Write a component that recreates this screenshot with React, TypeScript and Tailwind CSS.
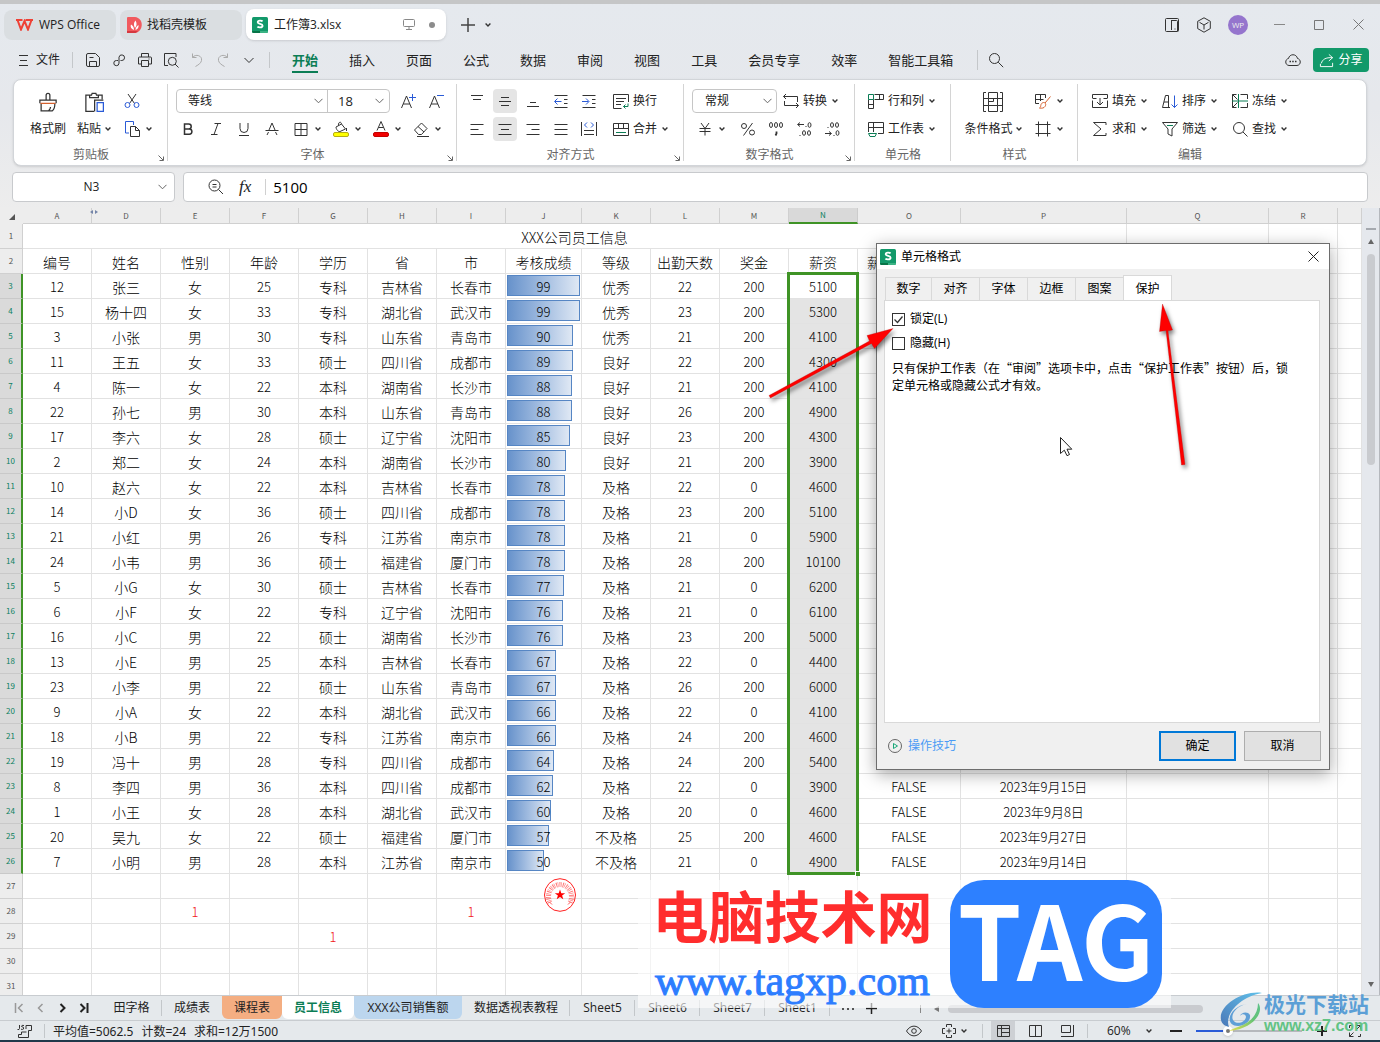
import type { ReactNode } from "react";
import { clsx } from "clsx";

type Row = [string, string, string, string, string, string, string, number, string, string, string, string, string?, string?];

const columns = [
  { name: "A", width: "w-[69px]" },
  { name: "D", width: "w-[69px]" },
  { name: "E", width: "w-[69px]" },
  { name: "F", width: "w-[69px]" },
  { name: "G", width: "w-[69px]" },
  { name: "H", width: "w-[69px]" },
  { name: "I", width: "w-[69px]" },
  { name: "J", width: "w-[76px]" },
  { name: "K", width: "w-[69px]" },
  { name: "L", width: "w-[69px]" },
  { name: "M", width: "w-[69px]" },
  { name: "N", width: "w-[69px]" },
  { name: "O", width: "w-[103px]" },
  { name: "P", width: "w-[166px]" },
  { name: "Q", width: "w-[142px]" },
  { name: "R", width: "w-[69px]" },
  { name: "", width: "" },
];

const headings = ["编号", "姓名", "性别", "年龄", "学历", "省", "市", "考核成绩", "等级", "出勤天数", "奖金", "薪资", "薪", "", "", "", ""];

const employees: Row[] = [
  ["12", "张三", "女", "25", "专科", "吉林省", "长春市", 99, "优秀", "22", "200", "5100"],
  ["15", "杨十四", "女", "33", "专科", "湖北省", "武汉市", 99, "优秀", "23", "200", "5300"],
  ["3", "小张", "男", "30", "专科", "山东省", "青岛市", 90, "优秀", "21", "200", "4100"],
  ["11", "王五", "女", "33", "硕士", "四川省", "成都市", 89, "良好", "22", "200", "4300"],
  ["4", "陈一", "女", "22", "本科", "湖南省", "长沙市", 88, "良好", "21", "200", "4100"],
  ["22", "孙七", "男", "30", "本科", "山东省", "青岛市", 88, "良好", "26", "200", "4900"],
  ["17", "李六", "女", "28", "硕士", "辽宁省", "沈阳市", 85, "良好", "23", "200", "4300"],
  ["2", "郑二", "女", "24", "本科", "湖南省", "长沙市", 80, "良好", "21", "200", "3900"],
  ["10", "赵六", "女", "22", "本科", "吉林省", "长春市", 78, "及格", "22", "0", "4600"],
  ["14", "小D", "女", "36", "硕士", "四川省", "成都市", 78, "及格", "23", "200", "5100"],
  ["21", "小红", "男", "26", "专科", "江苏省", "南京市", 78, "及格", "21", "0", "5900"],
  ["24", "小韦", "男", "36", "硕士", "福建省", "厦门市", 78, "及格", "28", "200", "10100"],
  ["5", "小G", "女", "30", "硕士", "吉林省", "长春市", 77, "及格", "21", "0", "6200"],
  ["6", "小F", "女", "22", "专科", "辽宁省", "沈阳市", 76, "及格", "21", "0", "6100"],
  ["16", "小C", "男", "22", "硕士", "湖南省", "长沙市", 76, "及格", "23", "200", "5000"],
  ["13", "小E", "男", "25", "本科", "吉林省", "长春市", 67, "及格", "22", "0", "4400"],
  ["23", "小李", "男", "22", "硕士", "山东省", "青岛市", 67, "及格", "26", "200", "6000"],
  ["9", "小A", "女", "22", "本科", "湖北省", "武汉市", 66, "及格", "22", "0", "4100"],
  ["18", "小B", "男", "22", "专科", "江苏省", "南京市", 66, "及格", "24", "200", "4600"],
  ["19", "冯十", "男", "28", "专科", "四川省", "成都市", 64, "及格", "24", "200", "5400"],
  ["8", "李四", "男", "36", "本科", "四川省", "成都市", 62, "及格", "22", "0", "3900", "FALSE", "2023年9月15日"],
  ["1", "小王", "女", "28", "本科", "湖北省", "武汉市", 60, "及格", "20", "0", "4600", "FALSE", "2023年9月8日"],
  ["20", "吴九", "女", "22", "硕士", "福建省", "厦门市", 57, "不及格", "25", "200", "4600", "FALSE", "2023年9月27日"],
  ["7", "小明", "男", "28", "本科", "江苏省", "南京市", 50, "不及格", "21", "0", "4900", "FALSE", "2023年9月14日"],
];

// loose values below the employee list, keyed by row then column
const strayCells: Record<number, Record<string, string>> = {
  28: { E: "1", I: "1" },
  29: { G: "1" },
};

const menus = ["开始", "插入", "页面", "公式", "数据", "审阅", "视图", "工具", "会员专享", "效率", "智能工具箱"];

const sheets = [
  { name: "田字格", style: "w-[61px]", line: true },
  { name: "成绩表", style: "w-[60px]" },
  { name: "课程表", style: "w-[60px] rounded-b-md bg-[#f4ae82]" },
  { name: "员工信息", style: "w-[72px] rounded-b-md bg-white font-bold text-[#0b7d55]" },
  { name: "XXX公司销售额", style: "w-[108px] rounded-b-md bg-[#bcd6ee]" },
  { name: "数据透视表教程", style: "w-[108px]", line: true },
  { name: "Sheet5", style: "w-[65px]", line: true },
  { name: "Sheet6", style: "w-[65px]", line: true },
  { name: "Sheet7", style: "w-[65px]", line: true },
  { name: "Sheet1", style: "w-[65px]", line: true },
];

const dialogTabs = ["数字", "对齐", "字体", "边框", "图案", "保护"];

function Icon({ size = 16, color = "#333", width = 1, children }: { size?: number; color?: string; width?: number; children: ReactNode }) {
  return (
    <svg width={size} height={size} viewBox="0 0 16 16" fill="none" stroke={color} strokeWidth={width} className="shrink-0" aria-hidden="true">
      {children}
    </svg>
  );
}

function Caret() {
  return (
    <svg width="6" height="6" viewBox="0 0 6 6" fill="none" stroke="#333" strokeWidth="1.4" className="shrink-0" aria-hidden="true">
      <path d="M.6 1.6 3 4l2.4-2.4" />
    </svg>
  );
}

function Chevron() {
  return (
    <svg width="9" height="6" viewBox="0 0 9 6" fill="none" stroke="#666" className="pointer-events-none shrink-0" aria-hidden="true">
      <path d="M.5.8l4 4 4-4" />
    </svg>
  );
}

function Tool({ label, children, caret, active, className = "w-7 justify-center" }: { label: string; children: ReactNode; caret?: boolean; active?: boolean; className?: string }) {
  return (
    <button type="button" aria-label={label} className={clsx("flex h-7 items-center", className)}>
      <span className={clsx("flex items-center justify-center", active && "size-6 rounded bg-[#e5e5e5]")}>{children}</span>
      {caret && <span className="ml-[6px]"><Caret /></span>}
    </button>
  );
}

function TextTool({ label, icon, caret, className }: { label: string; icon: ReactNode; caret?: boolean; className?: string }) {
  return (
    <button type="button" className={clsx("flex h-7 items-center gap-1 whitespace-nowrap", className)}>
      {icon}
      <span>{label}</span>
      {caret && <span className="ml-px"><Caret /></span>}
    </button>
  );
}

function Group({ label, className, corner, last, children }: { label: string; className: string; corner?: boolean; last?: boolean; children: ReactNode }) {
  return (
    <section aria-label={label} className={clsx("relative flex shrink-0 flex-col pt-[7px]", className)}>
      {children}
      <div className="flex h-[22px] items-center justify-center pt-px text-[#666]">{label}</div>
      {corner && (
        <svg width="6" height="6" viewBox="0 0 6 6" fill="none" stroke="#666" className="absolute right-1 bottom-1" aria-hidden="true">
          <path d="M.5.5l4.500 4.500M5.500 1.500v4h-4" />
        </svg>
      )}
      {!last && <span className="absolute top-1 right-0 bottom-1 w-px bg-[#d4d4d4]" />}
    </section>
  );
}

function SheetLogo() {
  return (
    <svg width="16" height="16" viewBox="0 0 16 16" className="shrink-0" aria-hidden="true">
      <rect width="16" height="16" rx="1.500" fill="#12996a" />
      <path d="M0 14h8v2H1.500Q0 16 0 14z" fill="#087447" />
      <path d="M8 14h8q0 2-1.500 2H8z" fill="#3bb384" />
      <path d="M10.600 4.300C9.800 3.500 5.700 3 5.700 5.300c0 2 4.900 1.300 4.900 3.400 0 2.300-4.200 2-5.200 1" fill="none" stroke="#fff" strokeWidth="1.800" />
    </svg>
  );
}

function TitleBar() {
  return (
    <header className="flex h-10 shrink-0 items-center pt-px pl-1">
      <button type="button" className="flex h-[30px] w-28 items-center gap-[6px] rounded-lg bg-[#dadee1] pl-3">
        <svg width="17" height="12" viewBox="0 0 17 12" fill="none" stroke="#ee4136" strokeWidth="2" aria-hidden="true">
          <path d="M0 1h6.500M1.500 1l3.500 9.500L8.500 2l3.500 8.500L15.500 1M9.500 1H17" />
        </svg>
        WPS Office
      </button>
      <button type="button" className="ml-1 flex h-[30px] w-[122px] items-center gap-[5px] rounded-lg bg-[#dadee1] pl-[7px]">
        <svg width="15" height="16" viewBox="0 0 15 16" aria-hidden="true">
          <path d="M0 1q0-1 1-1h7c9 1 9 14 0 16H0z" fill="#f15a5e" />
          <path d="M0 14h11l-2.500 2H0z" fill="#d5383f" />
          <path d="M7 13C4 12 3 9.500 4 7.500c2 1 3 3 3 5.500zM8 11c-1.500-3-1.500-5 .5-7.500C10 6 10 8.500 8 11zM8.500 13c0-2 1-4 3-5 .5 2.500-1 4.500-3 5z" fill="#fff" />
        </svg>
        找稻壳模板
      </button>
      <button type="button" className="ml-1 flex h-[31px] w-[200px] items-center gap-[6px] rounded-lg bg-white pl-[6px] shadow-sm">
        <SheetLogo />
        工作簿3.xlsx
        <span className="ml-auto flex items-center gap-[14px] pr-[11px]">
          <svg width="12" height="11" viewBox="0 0 12 11" fill="none" stroke="#888" aria-hidden="true">
            <rect x=".5" y=".5" width="11" height="7" rx="1" />
            <path d="M6 8v2M3 10.500h6" />
          </svg>
          <span className="size-[6px] rounded-full bg-[#8c8c8c]" />
        </span>
      </button>
      <button type="button" aria-label="新建" className="ml-[14px]">
        <Icon color="#444" width={1.500}><path d="M8 1v14M1 8h14" /></Icon>
      </button>
      <button type="button" aria-label="标签列表" className="ml-[9px]"><Caret /></button>
      <div className="ml-auto flex items-center">
        <button type="button" aria-label="窗口布局" className="mr-4">
          <Icon><rect x="1.500" y="1.500" width="13" height="13" rx="1" /><path d="M7.500 3v10M7.500 3.500h5q1 0 1 1V14M10.500 12h1" /></Icon>
        </button>
        <button type="button" aria-label="应用" className="mr-4">
          <Icon><path d="M8 .8l6.300 3.500v7.300L8 15.200l-6.300-3.600V4.300zM3.500 5.300 8 8l4.500-2.700M8 8v4.500" /></Icon>
        </button>
        <span className="mr-[26px] flex size-5 items-center justify-center rounded-full bg-[#9575cd] text-[8px] text-[#eee]">WP</span>
        <button type="button" aria-label="最小化" className="mr-[29px]"><svg width="11" height="11" stroke="#888"><path d="M0 5.500h11" /></svg></button>
        <button type="button" aria-label="最大化" className="mr-[29px]"><svg width="10" height="10" fill="none" stroke="#777"><path d="M.5.5h9v9h-9z" /></svg></button>
        <button type="button" aria-label="关闭" className="mr-4"><svg width="11" height="11" stroke="#777"><path d="M.5.5l10 10M10.500.5l-10 10" /></svg></button>
      </div>
    </header>
  );
}

function MenuBar() {
  return (
    <nav className="flex h-[34px] shrink-0 items-center pb-[2px] pl-[19px]">
      <button type="button" className="flex items-center gap-2">
        <svg width="9" height="11" stroke="#333" aria-hidden="true"><path d="M0 .5h9M1 5.500h7M0 10.500h9" /></svg>
        文件
      </button>
      <span className="ml-3 h-4 w-px bg-[#c4c7ca]" />
      <div className="ml-3 flex gap-[10px]">
        <button type="button" aria-label="保存">
          <Icon><path d="M1.500 3q0-1.500 1.500-1.500h7.500l4 4V13q0 1.500-1.500 1.500H3q-1.500 0-1.500-1.500zM4.500 14V9.500h7V14M4.500 5.500h4" /></Icon>
        </button>
        <button type="button" aria-label="输出链接">
          <Icon><path d="M7 8.500H5.500a2.600 2.600 0 1 0 2.500 2.700V5.200a2.800 2.800 0 1 1 2.800 3.300H9.500" /></Icon>
        </button>
        <button type="button" aria-label="打印">
          <Icon><path d="M4.500 5V1.500h7V5M4.500 12H1.500V6q0-1 1-1h11q1 0 1 1v6h-3M4.500 8.500h7v6h-7zM11.500 7h1" /></Icon>
        </button>
        <button type="button" aria-label="打印预览">
          <Icon><path d="M13 5V1.500H1.500v12H5M12 12l3.500 3.500" /><circle cx="9.300" cy="9.300" r="4" /></Icon>
        </button>
        <button type="button" aria-label="撤销">
          <Icon color="#aaa"><path d="M3.500 1.500v4h4M3.500 5.500c3-4 10-2 9 3-.5 2.500-2.500 4-6 6" /></Icon>
        </button>
        <button type="button" aria-label="恢复">
          <Icon color="#aaa"><path d="M12.500 1.500v4h-4M12.500 5.500c-3-4-10-2-9 3 .5 2.500 2.500 4 6 6" /></Icon>
        </button>
        <button type="button" aria-label="更多">
          <Icon><path d="M3.500 6 8 10.500 12.500 6" /></Icon>
        </button>
      </div>
      <span className="ml-3 h-4 w-px bg-[#c4c7ca]" />
      <div className="ml-[22px] flex gap-[31px] pt-px text-[13px]">
        {menus.map((menu, i) => (
          <button
            key={menu}
            type="button"
            className={clsx("h-[25px] whitespace-nowrap border-b-2 leading-5", i === 0 ? "border-[#0b7d55] font-bold text-[#0b7d55]" : "border-transparent")}
          >
            {menu}
          </button>
        ))}
      </div>
      <span className="ml-6 h-5 w-px bg-[#c4c7ca]" />
      <button type="button" aria-label="搜索" className="ml-[10px]">
        <Icon><circle cx="6.500" cy="6.500" r="5" /><path d="M10.200 10.200l5 5" /></Icon>
      </button>
      <button type="button" aria-label="云同步" className="ml-auto">
        <Icon><path d="M4 13.500c-4.500-.5-4-6.500-.5-7 1-5 8-5 9 0 3.500.5 4 6.500-.5 7z" /><path d="M4.500 9.500h1.500M7.200 9.500h1.500M10 9.500h1.500" strokeWidth="1.500" /></Icon>
      </button>
      <button type="button" className="mr-[11px] ml-3 flex h-6 w-14 items-center justify-center gap-1 rounded bg-[#12996a] text-white">
        <Icon color="#fff" size={15}><path d="M10.500 1.500 14.500 5l-4 3.500M14.500 5C7 4.500 3.500 7 2.500 11M1.500 11.500v3h13v-4" /></Icon>
        分享
      </button>
    </nav>
  );
}

function Ribbon() {
  return (
    <div className="mx-[13px] mt-px flex h-[87px] shrink-0 overflow-hidden rounded-lg border border-[#d2d5d9] bg-white shadow">
      <Group label="剪贴板" corner className="w-[154px]">
        <div className="flex pl-3">
          <button type="button" className="flex w-11 flex-col items-center whitespace-nowrap">
            <span className="flex h-7 items-center pt-[2px]">
              <Icon size={20}><path d="M6.500 6V2.500a1.500 1.500 0 0 1 3 0V6M1.500 9V6.500h13V9M2.500 9v6h9c1.500-1 2-3 2-6M8.500 15c1-1 1.500-2 1.500-3" /><path d="M2 9h12" stroke="#d5622f" /></Icon>
            </span>
            <span className="flex h-7 items-center">格式刷</span>
          </button>
          <button type="button" className="flex w-12 flex-col items-center whitespace-nowrap">
            <span className="flex h-7 items-center pt-[2px]">
              <Icon size={20}><path d="M4 2.500H1.500v13H8M12 2.500h2.500V6M4.500 4.500v-2H6l.5-1.500h3l.5 1.500h1.500v2z" /><path d="M8.500 15.500v-9h7" /><rect x="10.500" y="8.500" width="5" height="7" stroke="#2a5bd7" /></Icon>
            </span>
            <span className="flex h-7 items-center gap-1">粘贴<Caret /></span>
          </button>
          <div>
            <Tool label="剪切" className="w-7 justify-center"><Icon><path d="M4 1l6.500 9.500M12 1 5.500 10.500" /><circle cx="3.500" cy="12" r="2.500" stroke="#2a5bd7" /><circle cx="12.500" cy="12" r="2.500" stroke="#2a5bd7" /></Icon></Tool>
            <Tool label="复制" caret className="pl-[6px]"><Icon><path d="M5 12H1.500V.5h8V4" stroke="#2a5bd7" /><path d="M6.500 5.500h5l4 4v6h-9zM11.500 5.500v4h4" /></Icon></Tool>
          </div>
        </div>
      </Group>

      <Group label="字体" corner className="w-[289px]">
        <div className="flex h-7 items-center pl-2">
          <div className="flex h-6 items-center rounded border border-[#c6c6c6]">
            <div className="flex h-full w-[151px] items-center border-r border-[#c6c6c6] pr-1">
              <select aria-label="字体名称" className="w-full appearance-none pl-[11px] outline-none"><option>等线</option></select>
              <Chevron />
            </div>
            <div className="flex h-full w-[61px] items-center pr-[5px]">
              <select aria-label="字号" className="w-full appearance-none pl-[10px] text-[13px] outline-none"><option>18</option></select>
              <Chevron />
            </div>
          </div>
          <div className="ml-1 flex">
            <Tool label="增大字号"><Icon><path d="M1.500 15 6.500 3l5 12M3.200 11h6.600" /><path d="M9 4.500h7M12.500 1v7" stroke="#2a5bd7" /></Icon></Tool>
            <Tool label="减小字号"><Icon><path d="M1.500 15 6.500 3l5 12M3.200 11h6.600" /><path d="M9 2.500h7" stroke="#2a5bd7" /></Icon></Tool>
          </div>
        </div>
        <div className="flex pl-[6px]">
          <Tool label="加粗"><Icon width={1.500}><path d="M4.500 3h4.200a2.400 2.400 0 0 1 0 5H4.500zM4.500 8h4.800a2.500 2.500 0 0 1 0 5.200H4.500z" /></Icon></Tool>
          <Tool label="倾斜"><Icon><path d="M6.500 2.500h6.500M3 13.500h6.500M10 2.500 6 13.500" /></Icon></Tool>
          <Tool label="下划线"><Icon><path d="M4 2v5.500a4 4 0 0 0 8 0V2M3 14.500h10" /></Icon></Tool>
          <Tool label="删除线"><Icon><path d="M8 2 5 9M8 2l3 7M1.500 9.500h13M4.500 11l-1.500 3M11.500 11l1.500 3" /></Icon></Tool>
          <Tool label="边框" caret className="w-10 pl-[7px]"><Icon><path d="M2 2.500h12v12H2zM8 2.500v12M2 8.500h12" /></Icon></Tool>
          <Tool label="填充颜色" caret className="w-10 pl-[7px]">
            <Icon><path d="M3 6l5.500-3 4 5-5.500 2.500c-2 .5-4-2.500-4-4.500zM5.500 4.500C5 1 8 0 8.500 3M13.500 7v3" /><rect x=".5" y="11.500" width="15" height="4" rx="1.500" fill="#ffff00" stroke="#b5ad14" /></Icon>
          </Tool>
          <Tool label="字体颜色" caret className="w-10 pl-[7px]">
            <Icon><path d="M4 9.500 8 .5l4 9M5.500 6.500h5" /><rect x=".5" y="11.500" width="15" height="4" rx="1.500" fill="#f00000" stroke="#c40000" /></Icon>
          </Tool>
          <Tool label="清除" caret className="w-10 pl-[7px]"><Icon><path d="M1.500 9 8.500 2l5.500 5.500-5.500 6H5.500zM5 5.500l6 5.500M4 15.500h12" /></Icon></Tool>
        </div>
      </Group>

      <Group label="对齐方式" corner className="w-[227px]">
        <div className="flex pl-[6px]">
          <Tool label="顶端对齐"><Icon><path d="M2 2.500h12M4 6.500h8" /></Icon></Tool>
          <Tool label="垂直居中" active><Icon><path d="M4 4.500h8M2 8.500h12M4 12.500h8" /></Icon></Tool>
          <Tool label="底端对齐"><Icon><path d="M5 9.500h6M2 13.500h12" /></Icon></Tool>
          <Tool label="减少缩进"><Icon><path d="M1.500 2.500h13M11 6.500h3.500M11 10.500h3.500M1.500 14.500h13" /><path d="M8.500 8.500H2M4.500 5.500l-3 3 3 3" stroke="#2a5bd7" /></Icon></Tool>
          <Tool label="增加缩进"><Icon><path d="M1.500 2.500h13M11 6.500h3.500M11 10.500h3.500M1.500 14.500h13" /><path d="M1 8.500h6.500M5 5.500l3 3-3 3" stroke="#2a5bd7" /></Icon></Tool>
          <TextTool label="换行" className="pl-[10px]" icon={<Icon><path d="M8.500 15.500H.5V1.500h15V9M3 5.500h10M3 8.500h8M3 11.500h5" /><path d="M15 10.500v3h-4.500M12.500 11.500l-2 2 2 2" stroke="#0b7d55" /></Icon>} />
        </div>
        <div className="flex pl-[6px]">
          <Tool label="左对齐"><Icon><path d="M1.500 3.500h13M1.500 8.500h8M1.500 13.500h13" /></Icon></Tool>
          <Tool label="水平居中" active><Icon><path d="M1.500 3.500h13M4 8.500h8M1.500 13.500h13" /></Icon></Tool>
          <Tool label="右对齐"><Icon><path d="M1.500 3.500h13M6.500 8.500h8M1.500 13.500h13" /></Icon></Tool>
          <Tool label="两端对齐"><Icon><path d="M1.500 3.500h13M1.500 8.500h13M1.500 13.500h13" /></Icon></Tool>
          <Tool label="分散对齐"><Icon><path d="M.5 1v14M15.500 1v14M3 9.500h10M3 13.500h10" /><path d="M6 1.500l-2.500 2.500L6 6.500M10 1.500l2.500 2.500L10 6.500" stroke="#2a5bd7" /></Icon></Tool>
          <TextTool label="合并" caret className="pl-[10px]" icon={<Icon><path d="M.5 2.500h15v12H.5zM.5 7.500h15M5.500 2.500v5M10.500 2.500v5" /><path d="M3 11.500h10" stroke="#0b7d55" /></Icon>} />
        </div>
      </Group>

      <Group label="数字格式" corner className="w-[171px]">
        <div className="flex h-7 items-center pl-2">
          <div className="flex h-6 w-[85px] items-center rounded border border-[#c6c6c6] pr-1">
            <select aria-label="数字格式" className="w-full appearance-none pl-3 outline-none"><option>常规</option></select>
            <Chevron />
          </div>
          <TextTool label="转换" caret className="pl-[6px]" icon={<Icon><path d="M3 1 .5 3.500 3 6M.5 3.500h14V9M13 10l2.500 2.500L13 15M15.500 12.500h-14V8" /></Icon>} />
        </div>
        <div className="flex pl-2">
          <Tool label="货币" caret className="w-[42px] pl-[5px]"><Icon><path d="M4 2l4 5.500L12 2M2.500 7.500h11M2.500 10.500h11M8 7.500v7" /></Icon></Tool>
          <Tool label="百分比"><Icon><circle cx="4" cy="5" r="2.500" /><circle cx="12" cy="11.500" r="2.500" /><path d="M12.500 2l-9 12.500" /></Icon></Tool>
          <Tool label="千位分隔"><Icon><ellipse cx="3" cy="4" rx="1.500" ry="2.500" /><ellipse cx="8" cy="4" rx="1.500" ry="2.500" /><ellipse cx="13" cy="4" rx="1.500" ry="2.500" /><path d="M8.500 10.500v2l-1 2" strokeWidth="1.800" /></Icon></Tool>
          <Tool label="增加小数位"><Icon><path d="M8 3.500H2M4 1.500l-2.500 2 2.500 2M9.500 5.500h1M3.500 14.500h1" /><ellipse cx="13.500" cy="4" rx="1.500" ry="2.300" /><ellipse cx="8" cy="12" rx="1.500" ry="2.300" /><ellipse cx="13" cy="12" rx="1.500" ry="2.300" /></Icon></Tool>
          <Tool label="减少小数位"><Icon><path d="M1 12.500h6M5 10.500l2.500 2-2.500 2M9.500 14.500h1M3.500 6.500h1" /><ellipse cx="13.500" cy="12" rx="1.500" ry="2.300" /><ellipse cx="8" cy="4" rx="1.500" ry="2.300" /><ellipse cx="13" cy="4" rx="1.500" ry="2.300" /></Icon></Tool>
        </div>
      </Group>

      <Group label="单元格" className="w-24">
        <TextTool label="行和列" caret className="pl-[13px]" icon={<Icon><path d="M6.500 1.500h9V6.500h-9M11.500 1.500v5M.5 6.500v9h5v-9M.5 11.500h5" /><path d="M.5 1.500h5v5h-5z" stroke="#0b7d55" /></Icon>} />
        <TextTool label="工作表" caret className="pl-[13px]" icon={<Icon><path d="M.5 11V1.500h15v11H10M.5 6.500h15M5.500 1.500V11" /><path d="M.5 12.500h8l-1.500 3h-5z" stroke="#0b7d55" /></Icon>} />
      </Group>

      <Group label="样式" className="w-[127px]">
        <div className="flex pl-3">
          <button type="button" className="flex w-[60px] flex-col items-center whitespace-nowrap">
            <span className="flex h-7 items-center pt-[2px]">
              <svg width="20" height="20" viewBox="0 0 20 20" fill="none" stroke="#333" aria-hidden="true">
                <path d="M3 .5H.5v19H3M17 .5h2.500v19H17M.5 6.500h5M.5 13.500h5M14.500 6.500h5M14.500 13.500h5M5.500 .5h9v6h-9zM5.500 13.500h9v6h-9zM5.500 6.500v7M14.500 6.500v7M10.500 6.500v3h-5" />
              </svg>
            </span>
            <span className="flex h-7 items-center gap-[3px]">条件格式<Caret /></span>
          </button>
          <div className="pl-3">
            <Tool label="单元格样式" caret><Icon><path d="M10.500 5V1.500H.5v9H4M.5 6.500h8M5.500 1.500V8" /><path d="M15.500 3.500 10 10M8.500 9.500c2 0 3 2 1.500 4-1 1.500-3 2-5.500 1.500 1.500-1 1-2 1.500-3.500.5-1 1.500-2 2.500-2z" stroke="#d5622f" /></Icon></Tool>
            <Tool label="表格边框" caret><Icon><path d="M3.500.5v15M12.500.5v15M.5 3.500h15M.5 12.500h15" /></Icon></Tool>
          </div>
        </div>
      </Group>

      <Group label="编辑" last className="w-[224px]">
        <div className="flex pl-[14px]">
          <TextTool label="填充" caret className="w-[70px]" icon={<Icon><path d="M.5 5V1.500h15V5M.5 5.500h4M11.500 5.500h4M.5 7.500v7h15v-7M8 5v7M5 9l3 3 3-3" /></Icon>} />
          <TextTool label="排序" caret className="w-[70px]" icon={<Icon><path d="M.5 14.500l3-12h3v12M2 9h4.500M.5 14.500h7.500" /><path d="M12.500 2.500v12M9.500 11.500l3 3 3-3" stroke="#2a5bd7" /></Icon>} />
          <TextTool label="冻结" caret className="w-[70px]" icon={<Icon><path d="M4.500 1.500h-4v13h4M8.500 1.500h7V6M15.500 10v4.500h-7M.5 1.500l5 5M.5 14.500l5-5" /><path d="M0 8h16M6.500 1v14" stroke="#0b7d55" /></Icon>} />
        </div>
        <div className="flex pl-[14px]">
          <TextTool label="求和" caret className="w-[70px]" icon={<Icon><path d="M14 4V1.500H1.500L9 8l-7.500 6.500H14V12" /></Icon>} />
          <TextTool label="筛选" caret className="w-[70px]" icon={<Icon><path d="M.5 1.500h15L10 8v7l-4-2V8z" /><path d="M5 4.500h6" stroke="#0b7d55" /></Icon>} />
          <TextTool label="查找" caret className="w-[70px]" icon={<Icon><circle cx="7" cy="7" r="5.500" /><path d="M11 11l4.500 4.500" /></Icon>} />
        </div>
      </Group>
    </div>
  );
}

function FormulaBar() {
  return (
    <div className="mx-3 mt-[6px] flex h-[30px] shrink-0 gap-2">
      <label className="flex w-[163px] items-center rounded border border-[#c8cacd] bg-white pr-[7px]">
        <input aria-label="名称框" defaultValue="N3" className="w-full min-w-0 pl-3 text-center outline-none" />
        <Chevron />
      </label>
      <div className="flex flex-1 items-center rounded border border-[#c8cacd] bg-white pl-6">
        <button type="button" aria-label="浏览公式"><Icon><circle cx="6.500" cy="6.500" r="5.500" /><path d="M10.500 10.500l4.500 4.500M4.500 5.500h4M4.500 8h4" /></Icon></button>
        <button type="button" aria-label="插入函数" className="ml-[15px] font-['Liberation_Serif',serif] text-[17px]/5 italic">fx</button>
        <span className="ml-[14px] h-4 w-px bg-[#d0d0d0]" />
        <input aria-label="编辑栏" defaultValue="5100" className="ml-[7px] w-full min-w-0 flex-1 text-[15px] text-black outline-none" />
      </div>
    </div>
  );
}

function Stamp() {
  return (
    <svg width="32" height="34" viewBox="0 0 32 34" fill="none" className="absolute top-1 left-[38px] z-10" aria-hidden="true">
      <ellipse cx="16" cy="17" rx="15.500" ry="16.300" stroke="#f22" />
      <path d="M6 24.500A11.500 12 0 1 1 26 24.500" stroke="#f33" strokeWidth="5" strokeDasharray="1 .7 .6 1.100" opacity=".65" />
      <path d="M16 11.500l1.300 3.700h3.900l-3.100 2.300 1.200 3.800-3.300-2.300-3.300 2.300 1.200-3.800-3.100-2.300h3.900z" fill="#f00" />
      <path d="M5.500 24l2.500 2.500M26.500 24l-2.500 2.500" stroke="#f55" />
    </svg>
  );
}

function RowHead({ n, selected }: { n: number; selected?: boolean }) {
  return (
    <th
      scope="row"
      className={clsx(
        "h-[25px] border-b p-0 text-center text-[8px]/[16px] font-normal",
        selected ? "border-r-2 border-r-[#3f9326] border-b-[#c9c9c9] bg-[#dadada] text-[#0b8060]" : "border-r border-[#d0d0d0] bg-[#ededed] text-[#555]",
      )}
    >
      {n}
    </th>
  );
}

const cell = "h-[25px] overflow-hidden border-r border-b border-[#e2e2e2] p-0 pt-px text-center whitespace-nowrap";
const isNumber = (v: unknown) => /^[\dF]/.test(String(v));

function Grid() {
  return (
    <div className="relative min-w-0 flex-1 overflow-hidden bg-white">
      <table className="w-full table-fixed border-separate border-spacing-0 font-['Noto_Sans_CJK_SC',sans-serif] font-light text-black">
        <colgroup>
          <col className="w-[23px]" />
          {columns.map((c, i) => <col key={i} className={c.width} />)}
        </colgroup>
        <thead>
          <tr className="bg-[#ededed] text-[8px]/[14px] text-[#555]">
            <th className="h-[16px] p-0 pt-[2px]">
              <svg width="6" height="6" className="ml-[9px]" aria-hidden="true"><path d="M6 0v6H0z" fill="#555" /></svg>
            </th>
            {columns.map((c, i) => (
              <th
                key={i}
                scope="col"
                className={clsx(
                  "h-[16px] border-r p-0 font-normal",
                  c.name === "N" ? "border-b-2 border-r-[#ccc] border-b-[#3f9326] bg-[#d9d9d9] text-[#0b8060]" : "border-b border-[#d0d0d0] pt-px",
                )}
              >
                {c.name}
              </th>
            ))}
          </tr>
        </thead>
        <tbody>
          <tr>
            <RowHead n={1} />
            <td colSpan={14} className={clsx(cell, "text-[14px]/[18px]")}>XXX公司员工信息</td>
            <td className={cell} /><td className={cell} /><td className={cell} />
          </tr>
          <tr>
            <RowHead n={2} />
            {headings.map((h, i) => (
              <td key={i} className={clsx(cell, "text-[14px]/[18px]", i === 12 && "pl-[9px] text-left")}>{h}</td>
            ))}
          </tr>
          {employees.map((row, r) => (
            <tr key={row[0]}>
              <RowHead n={r + 3} selected />
              {columns.map((c, i) => {
                const value = row[i];
                if (c.name === "J") {
                  return (
                    <td key={i} className={clsx(cell, "relative pt-[2px] text-[13px]/[18px]")}>
                      <span
                        className="absolute top-px left-px h-[21px] border border-[#5686c4] bg-linear-to-r from-[#6792cb] to-[#dfe8f4]"
                        style={{ width: Math.round((row[7] / 99) * 73) }}
                      />
                      <span className="relative">{value}</span>
                    </td>
                  );
                }
                return (
                  <td
                    key={i}
                    className={clsx(cell, isNumber(value) ? "pt-[2px] text-[13px]/[18px]" : "text-[14px]/[18px]", c.name === "N" && r > 0 && "border-[#cfcfcf] bg-[#e4e4e4]")}
                  >
                    {value}
                  </td>
                );
              })}
            </tr>
          ))}
          {[27, 28, 29, 30, 31].map((n) => (
            <tr key={n}>
              <RowHead n={n} />
              {columns.map((c, i) => (
                <td key={i} className={clsx(cell, "text-[13px]/[18px] text-[#f01818]", n === 27 && c.name === "J" && "relative overflow-visible")}>
                  {strayCells[n]?.[c.name]}
                  {n === 27 && c.name === "J" && <Stamp />}
                </td>
              ))}
            </tr>
          ))}
        </tbody>
      </table>
      {/* selection frame around N3:N26 */}
      <div className="pointer-events-none absolute top-[64px] left-[787px] h-[603px] w-[72px] border-3 border-[#3f9326]">
        <span className="absolute -right-1 -bottom-1 size-[5px] border-t border-l border-white bg-[#3f9326]" />
      </div>
      {/* marker for the hidden columns between A and D */}
      <svg width="8" height="4" viewBox="0 0 8 4" className="absolute top-[2px] left-[90px]" aria-hidden="true"><path d="M3 0v4L0 2zM5 0v4l3-2z" fill="#7384a8" /></svg>
    </div>
  );
}

function VerticalScroll() {
  return (
    <div className="flex w-[18px] shrink-0 flex-col items-center border-r border-[#b5b8bd] bg-[#e5e8ed] pt-[20px]">
      <span className="mb-[9px] h-[2px] w-[10px] bg-[#a5a9af]" />
      <svg width="6" height="5" aria-hidden="true"><path d="M3 0l3 5H0z" fill="#666" /></svg>
      <span className="mt-[10px] h-[211px] w-2 rounded-full bg-[#c9cbcf]" />
      <svg width="6" height="5" className="mt-auto mb-2" aria-hidden="true"><path d="M0 0h6L3 5z" fill="#666" /></svg>
    </div>
  );
}

function SheetTabs() {
  return (
    <div className="flex h-[26px] shrink-0 items-start border-t border-b border-[#c8ccd0] bg-[#e5e9ec]">
      <div className="flex h-6 w-[101px] items-center gap-[11px] pl-[14px]">
        <button type="button" aria-label="第一个"><svg width="10" height="10" fill="none" stroke="#999" strokeWidth="1.500"><path d="M1.500 0v10M8.500 1l-4 4 4 4" /></svg></button>
        <button type="button" aria-label="上一个"><svg width="10" height="10" fill="none" stroke="#999" strokeWidth="1.500"><path d="M7.500 1l-4 4 4 4" /></svg></button>
        <button type="button" aria-label="下一个" className="ml-[2px]"><svg width="10" height="10" fill="none" stroke="#222" strokeWidth="2"><path d="M2.500 1l4 4-4 4" /></svg></button>
        <button type="button" aria-label="最后一个"><svg width="10" height="10" fill="none" stroke="#222" strokeWidth="2"><path d="M8.500 0v10M1.500 1l4 4-4 4" /></svg></button>
      </div>
      {sheets.map((s) => (
        <button
          key={s.name}
          type="button"
          className={clsx("relative flex h-[23px] shrink-0 items-center justify-center whitespace-nowrap", s.style)}
        >
          {s.name}
          {s.line && <span className="absolute top-1 right-0 h-4 w-px bg-[#c3c7ca]" />}
        </button>
      ))}
      <div className="flex h-[25px] flex-1 items-center pl-3">
        <button type="button" aria-label="更多工作表" className="flex gap-[3px]">
          <span className="size-[2px] bg-[#555]" /><span className="size-[2px] bg-[#555]" /><span className="size-[2px] bg-[#555]" />
        </button>
        <button type="button" aria-label="新建工作表" className="ml-3"><svg width="11" height="11" stroke="#222" strokeWidth="1.500"><path d="M5.500 0v11M0 5.500h11" /></svg></button>
        <span className="ml-[43px] h-2 w-px bg-[#888]" />
        <svg width="5" height="6" className="ml-[13px]" aria-hidden="true"><path d="M5 0v6L0 3z" fill="#777" /></svg>
        <span className="ml-[9px] h-2 w-[255px] rounded-full bg-[#c9cbcf]" />
        <svg width="5" height="6" className="mr-[35px] ml-auto" aria-hidden="true"><path d="M0 0v6l5-3z" fill="#555" /></svg>
      </div>
    </div>
  );
}

function StatusBar() {
  return (
    <footer className="flex h-[19px] shrink-0 items-center bg-[#e5e9ec] pl-4 text-[12px]/[18px]">
      <Icon><path d="M3.500 2v3.500q0 1.500-2 1M8 2.500q-2.500-.8-2.500 1 3 .5 2 2.500-1 .8-2.500.2M10 6V2.500h5.500v5h-3v7H2.500v-3h3M5.500 11.500V9h5" /></Icon>
      <span className="ml-3 h-[14px] w-px bg-[#c3c7ca]" />
      <span className="ml-2 flex gap-2 pt-[2px] font-['Noto_Sans','Noto_Sans_CJK_SC',sans-serif]">
        <span>平均值=5062.5</span>
        <span>计数=24</span>
        <span>求和=12万1500</span>
      </span>
      <div className="ml-auto flex h-full items-center">
        <button type="button" aria-label="护眼模式"><Icon><path d="M.5 8c4-6.500 11-6.500 15 0-4 6.500-11 6.500-15 0z" /><circle cx="8" cy="8" r="2.300" /></Icon></button>
        <button type="button" aria-label="阅读模式" className="ml-[19px] flex items-center gap-1">
          <Icon><path d="M5.500 4V1.500h5V4M5.500 12v2.500h5V12M4 5.500H1.500v5H4M12 5.500h2.500v5H12M5.500 8h5M8 5.500v5" /></Icon>
          <Caret />
        </button>
        <span className="ml-[15px] h-[14px] w-px bg-[#c3c7ca]" />
        <button type="button" aria-label="普通视图" className="ml-2 flex h-full w-6 items-center justify-center bg-[#cdd0d4]">
          <svg width="13" height="12" viewBox="0 0 13 12" fill="none" stroke="#333" aria-hidden="true"><path d="M.5.5h12v11H.5zM.5 3.500h12M4.500.5v11M4.500 7.500h8" /></svg>
        </button>
        <button type="button" aria-label="页面布局" className="ml-[14px]">
          <svg width="13" height="12" viewBox="0 0 13 12" fill="none" stroke="#333" aria-hidden="true"><path d="M.5.5h12v11H.5zM6.500.5v11" /></svg>
        </button>
        <button type="button" aria-label="分页预览" className="ml-[19px]">
          <svg width="13" height="12" viewBox="0 0 13 12" fill="none" stroke="#333" aria-hidden="true"><path d="M.5.5h9v7h-9zM12.500 0v11.500H0" /></svg>
        </button>
        <span className="ml-[13px] h-[14px] w-px bg-[#c3c7ca]" />
        <span className="ml-[19px] w-[39px]">60%</span>
        <Caret />
        <button type="button" aria-label="缩小" className="ml-[18px] h-[2px] w-3 bg-[#222]" />
        <input
          type="range"
          aria-label="缩放"
          min={0}
          max={100}
          defaultValue={28}
          className="ml-[14px] h-[2px] w-[106px] appearance-none bg-[linear-gradient(90deg,#2a5bd7_29%,#b5b8bc_29%)] [&::-webkit-slider-thumb]:size-[10px] [&::-webkit-slider-thumb]:appearance-none [&::-webkit-slider-thumb]:rounded-full [&::-webkit-slider-thumb]:border-3 [&::-webkit-slider-thumb]:border-white [&::-webkit-slider-thumb]:bg-[#777] [&::-webkit-slider-thumb]:shadow"
        />
        <button type="button" aria-label="放大" className="ml-[15px]"><svg width="10" height="10" stroke="#222" strokeWidth="2"><path d="M5 0v10M0 5h10" /></svg></button>
        <button type="button" aria-label="全屏" className="mr-[17px] ml-[20px]"><Icon><path d="M9.500 2.500h4v4M13.500 2.500l-4 4M6.500 13.500h-4v-4M2.500 13.500l4-4M2.500 5V2.500H5M11 13.500h2.500V11" /></Icon></button>
      </div>
    </footer>
  );
}

function CellFormatDialog() {
  return (
    <div role="dialog" aria-labelledby="dialog-title" className="absolute top-[243px] left-[876px] flex h-[527px] w-[454px] flex-col border border-[#6d6d6d] bg-[#f0f0f0] text-black shadow-[0_4px_16px_rgba(0,0,0,0.35)]">
      <div className="flex h-[25px] items-center bg-white pl-[3px]">
        <SheetLogo />
        <h2 id="dialog-title" className="ml-[5px]">单元格格式</h2>
        <button type="button" aria-label="关闭" className="mr-[10px] ml-auto"><svg width="11" height="11" stroke="#222"><path d="M.5.5l10 10M10.500.5l-10 10" /></svg></button>
      </div>
      <div role="tablist" className="mt-[6px] flex items-end pl-2">
        {dialogTabs.map((tab) => (
          <button
            key={tab}
            type="button"
            role="tab"
            aria-selected={tab === "保护"}
            className={clsx(
              "border-t border-r border-[#d9d9d9] first:w-[47px] first:border-l",
              tab === "保护" ? "-mb-px -ml-px h-[26px] w-[49px] border-l bg-white" : "h-[23px] w-12 bg-[#f0f0f0]",
            )}
          >
            {tab}
          </button>
        ))}
      </div>
      <div role="tabpanel" className="mr-[9px] ml-[7px] flex-1 border border-[#d9d9d9] bg-white px-[7px] pt-[9px]">
        <label className="flex h-[18px] items-center gap-[5px]">
          <span className="grid size-[13px]">
            <input type="checkbox" defaultChecked className="peer col-start-1 row-start-1 size-[13px] appearance-none border border-[#333] bg-white" />
            <svg width="13" height="13" fill="none" stroke="#333" strokeWidth="1.300" className="pointer-events-none invisible col-start-1 row-start-1 peer-checked:visible" aria-hidden="true">
              <path d="M2.500 6.500l3 3 5-6" />
            </svg>
          </span>
          锁定(L)
        </label>
        <label className="mt-[6px] flex h-[18px] items-center gap-[5px]">
          <input type="checkbox" className="size-[13px] appearance-none border border-[#333] bg-white" />
          隐藏(H)
        </label>
        <p className="mt-[7px] max-w-[400px] font-['Noto_Sans_CJK_SC',sans-serif] leading-[17px]">
          只有保护工作表（在“审阅”选项卡中，点击“保护工作表”按钮）后，锁定单元格或隐藏公式才有效。
        </p>
      </div>
      <div className="flex h-[46px] items-center pr-2 pl-[11px]">
        <a href="#tips" className="flex items-center gap-[6px] text-[#4a9bf5]">
          <svg width="14" height="14" viewBox="0 0 14 14" fill="none" aria-hidden="true">
            <circle cx="7" cy="7" r="6.500" stroke="#666" />
            <path d="M5.500 4.500l4 2.500-4 2.500z" stroke="#18a878" />
          </svg>
          操作技巧
        </a>
        <button type="button" className="ml-auto h-[30px] w-[77px] border-2 border-[#0078d7] bg-[#e1e1e1]">确定</button>
        <button type="button" className="ml-2 h-[30px] w-[77px] border border-[#adadad] bg-[#e1e1e1]">取消</button>
      </div>
    </div>
  );
}

function Annotations() {
  return (
    <svg width="1380" height="1042" viewBox="0 0 1380 1042" className="pointer-events-none absolute top-0 left-0" aria-hidden="true">
      <g fill="#fe0000" stroke="#b00505" strokeWidth=".3" className="drop-shadow-[2px_3px_2px_rgba(0,0,0,0.5)]">
        <path d="M769 395.500 869.500 341l-2.500-5.500 26-7-18.500 20-3-5-101 54.500z" />
        <path d="M1181.500 465l-15.500-134.500-6.500 1 3-27.500 10 26-4.500.8L1185 464.500z" />
      </g>
      <path d="M1060.500 437.500v16l3.800-3.300 2.700 5.500 2.500-1.200-2.500-5.300h4.800z" fill="#fff" stroke="#222" />
    </svg>
  );
}

function TagBanner() {
  return (
    <div className="absolute top-[880px] left-[638px] flex h-32 w-[533px] bg-white/60">
      <div className="flex w-[312px] flex-col items-center pr-[3px]">
        <span className="h-[76px] whitespace-nowrap font-['Noto_Sans_CJK_SC',sans-serif] text-[56px]/[68px] font-bold text-[#ff2d2d]">电脑技术网</span>
        <span className="whitespace-nowrap font-['Liberation_Serif',serif] text-[42px]/[50px] text-[#2d7dff] [-webkit-text-stroke:1px_#2d7dff]">www.tagxp.com</span>
      </div>
      <div className="flex h-32 w-[212px] items-center justify-center rounded-[34px] bg-[#2d80ff] pb-[14px] font-['Noto_Sans_CJK_SC',sans-serif] text-[102px]/[120px] font-bold text-white">
        TAG
      </div>
    </div>
  );
}

function SiteMark() {
  return (
    <div className="absolute top-[991px] left-[1220px] flex gap-px">
      <svg width="43" height="42" viewBox="0 0 43 42" fill="none" aria-hidden="true">
        <defs>
          <linearGradient id="swoosh" x1="0" y1="1" x2="1" y2="0">
            <stop offset="0" stopColor="#4a78b8" /><stop offset="1" stopColor="#61c1ea" />
          </linearGradient>
          <linearGradient id="leaf" x1="0" y1="1" x2="1" y2="0">
            <stop offset="0" stopColor="#e6df4a" /><stop offset=".6" stopColor="#64c377" /><stop offset="1" stopColor="#5cc28a" />
          </linearGradient>
        </defs>
        <path d="M42 2C24-1-2 14 1 29c1 4 4 6 8 7-5-12 10-30 33-34z" fill="url(#swoosh)" />
        <path d="M27 13c-9 1-17 10-14 16 3 5 12 3 13-3 0-3-4-4-6-1 1-4 8-5 10-1 1 6-5 11-12 11C4 35 8 16 27 13z" fill="#5f9fd6" />
        <path d="M38 12c7 8-4 26-29 28 3-2 6-3 9-4 12-4 20-12 20-24z" fill="url(#leaf)" />
      </svg>
      <div className="whitespace-nowrap">
        <div className="font-['Noto_Sans_CJK_SC',sans-serif] text-[21px]/[25px] font-bold text-[#5b9fd6]">极光下载站</div>
        <div className="font-['Liberation_Sans',sans-serif] text-[16px]/[20px] font-bold text-[#62c384]">www.xz7.com</div>
      </div>
    </div>
  );
}

export default function App() {
  return (
    <div lang="zh-CN" className="relative flex h-screen flex-col overflow-hidden border-t-4 border-b-2 border-t-[#c5c6c7] border-b-[#20384a] bg-linear-to-b from-[#e5e9ee] via-[#e6e8ec] via-10% to-[#ededed] to-20% font-['Open_Sans','Noto_Sans_CJK_SC',sans-serif] text-[12px]/[18px] text-[#222]">
      <TitleBar />
      <MenuBar />
      <Ribbon />
      <FormulaBar />
      <main className="mt-[6px] flex min-h-0 flex-1">
        <Grid />
        <VerticalScroll />
      </main>
      <SheetTabs />
      <StatusBar />
      <div className="absolute -top-1 left-0">
        <CellFormatDialog />
        <Annotations />
        <TagBanner />
        <SiteMark />
      </div>
    </div>
  );
}
